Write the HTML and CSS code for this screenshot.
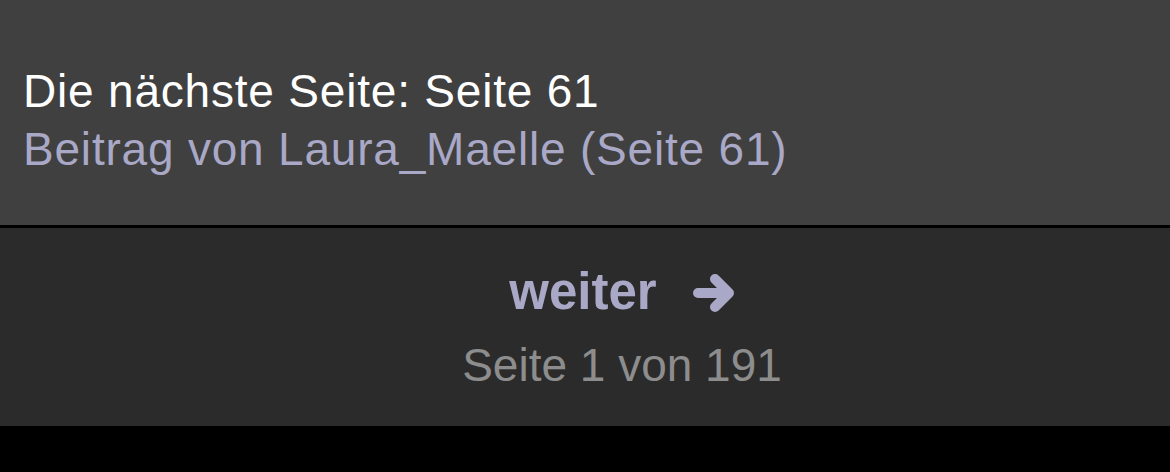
FILE: index.html
```html
<!DOCTYPE html>
<html lang="de">
<head>
    <meta charset="UTF-8">
    <meta name="viewport" content="width=device-width, initial-scale=1.0">
    <title>Thema</title>
    <link rel="stylesheet" href="styles.css">
</head>
<body>
    <div id="next-page">
        <div class="next-title">Die nächste Seite: Seite 61</div>
        <div class="next-sub">Beitrag von Laura_Maelle (Seite 61)</div>
    </div>

    <div id="pager">
        <a class="pager-next" href="#">
            <span>weiter</span>
            <svg class="pager-arrow" width="42" height="42" viewBox="0 0 42 42">
                <path d="M5 21 H35 M22 7 L36 21 L22 35" fill="none" stroke="#a9a8c6" stroke-width="10" stroke-linecap="round" stroke-linejoin="round"/>
            </svg>
        </a>
        <div class="pager-count">Seite 1 von 191</div>
    </div>
</body>
</html>
```

FILE: styles.css
```css
body {
    font-family: "Liberation Sans", Arial, sans-serif;
    margin: 0;
    padding: 0;
    background-color: #000;
    height: 472px;
    overflow: hidden;
}

#next-page {
    background-color: #404040;
    height: 228px;
    box-sizing: border-box;
    padding: 62px 23px 0;
    border-bottom: 3px solid #000;
}

.next-title {
    color: #fff;
    font-size: 46px;
    line-height: 58px;
    letter-spacing: 0.8px;
}

.next-sub {
    color: #a9a8c6;
    font-size: 46px;
    line-height: 58px;
    letter-spacing: 0.8px;
}

#pager {
    background-color: #2b2b2b;
    height: 198px;
    box-sizing: border-box;
    padding: 34px 0 0 74px;
    display: flex;
    flex-direction: column;
    align-items: center;
}

.pager-next {
    display: flex;
    align-items: center;
    gap: 36px;
    color: #a9a8c6;
    font-size: 51px;
    font-weight: bold;
    text-decoration: none;
    line-height: 60px;
}

.pager-arrow {
    display: block;
    margin-top: 2px;
}

.pager-count {
    color: #8d8d8d;
    font-size: 46px;
    line-height: 56px;
    margin-top: 15px;
}
```
